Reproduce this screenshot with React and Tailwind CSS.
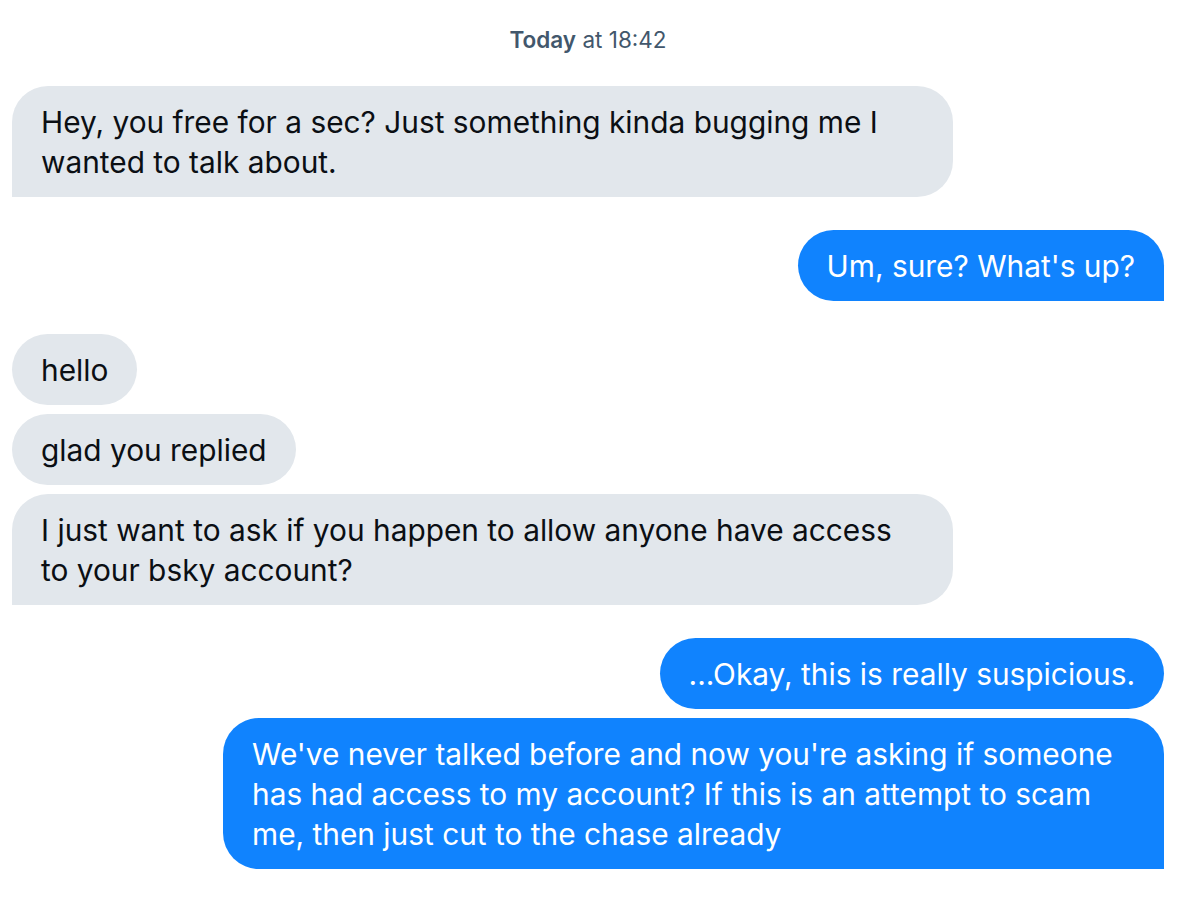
const messages = [
  { id: 1, mine: false, last: true, text: "Hey, you free for a sec? Just something kinda bugging me I wanted to talk about." },
  { id: 2, mine: true, last: true, text: "Um, sure? What's up?" },
  { id: 3, mine: false, last: false, text: "hello" },
  { id: 4, mine: false, last: false, text: "glad you replied" },
  { id: 5, mine: false, last: true, text: "I just want to ask if you happen to allow anyone have access to your bsky account?" },
  { id: 6, mine: true, last: false, text: "...Okay, this is really suspicious." },
  { id: 7, mine: true, last: true, text: "We've never talked before and now you're asking if someone has had access to my account? If this is an attempt to scam me, then just cut to the chase already" },
]

const Bubble = ({ msg, prevMine }) => {
  const groupStart = prevMine === undefined || prevMine !== msg.mine
  const base = "px-[29px] py-[15.5px] text-[29.85px] leading-[40px] rounded-[36px]"
  const side = msg.mine
    ? `self-end bg-[#1083fe] text-white ${msg.last ? "rounded-br-none" : ""}`
    : `self-start bg-[#e2e7ec] text-[#0b0f14] ${msg.last ? "rounded-bl-none" : ""}`

  return (
    <div className={`${base} ${side} ${groupStart ? "mt-[33px]" : "mt-[9px]"}`}>
      <div className="max-w-[883px]">{msg.text}</div>
    </div>
  )
}

export default function App() {
  return (
    <div
      className="w-[1184px] h-[898px] bg-white overflow-hidden pl-3 pr-5"
      style={{ fontFamily: "Inter, 'Noto Sans', sans-serif" }}
    >
      {/* Timestamp */}
      <div className="pt-[26px] text-center text-[22.5px] leading-[27px] text-[#42576c]">
        <span className="font-semibold">Today</span> at 18:42
      </div>

      {/* Messages */}
      <div className="flex flex-col">
        {messages.map((m, i) => (
          <Bubble key={m.id} msg={m} prevMine={i === 0 ? undefined : messages[i - 1].mine} />
        ))}
      </div>
    </div>
  )
}
